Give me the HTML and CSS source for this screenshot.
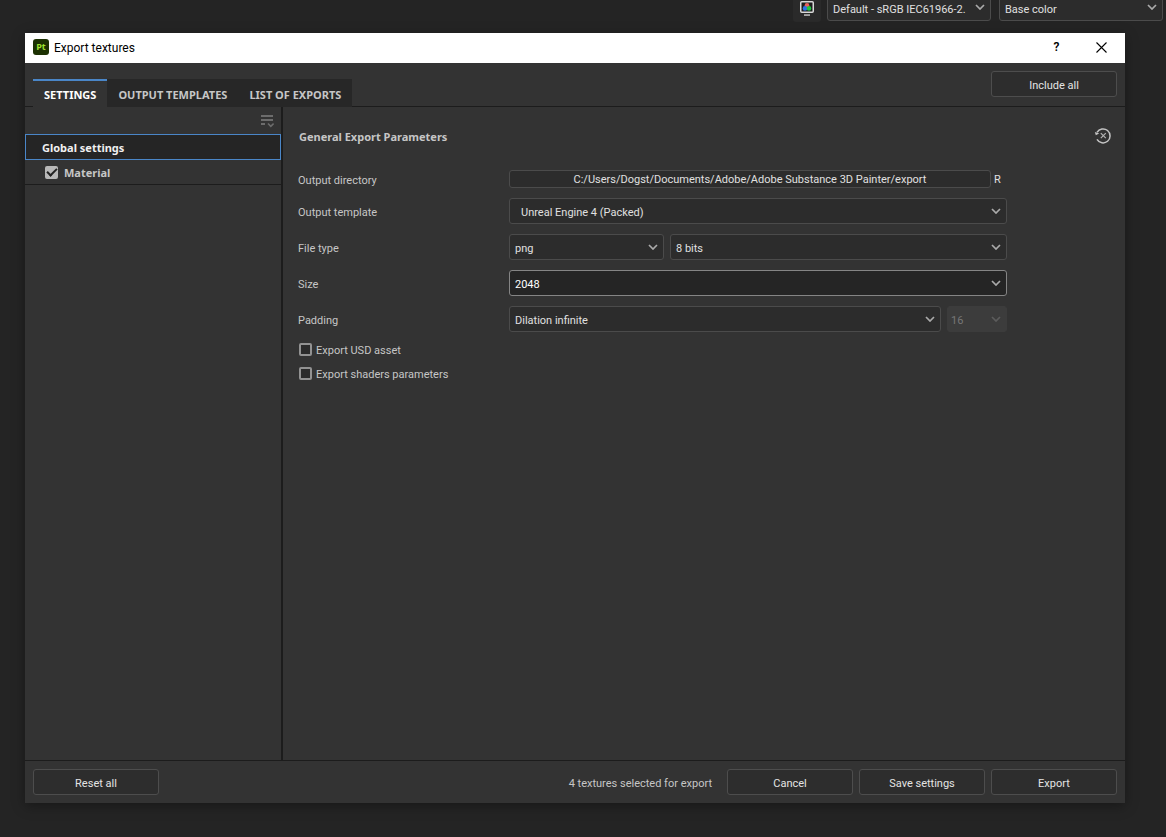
FILE: index.html
```html
<!DOCTYPE html>
<html lang="en">
<head>
<meta charset="utf-8">
<title>Export textures</title>
<link rel="stylesheet" href="styles.css">
</head>
<body>
<svg class="sprite" aria-hidden="true">
  <symbol id="chevron" viewBox="0 0 10 6"><path d="M1 1l4 4 4-4" fill="none" stroke="currentColor" stroke-width="1.7"/></symbol>
</svg>

<div class="toolbar">
  <button class="display-button" aria-label="Color management">
    <svg width="16" height="16" viewBox="0 0 16 16">
      <rect x="1.75" y="1.75" width="12.5" height="10.5" rx="1" fill="#1d1d1d" stroke="#d8d8d8" stroke-width="1.5"/>
      <circle cx="8" cy="5.2" r="2.3" fill="#e9605c"/>
      <circle cx="6" cy="8.4" r="2.3" fill="#2d73e6"/>
      <circle cx="10" cy="8.4" r="2.3" fill="#20c540"/>
      <rect x="5" y="14.4" width="6" height="1.3" fill="#d8d8d8"/>
    </svg>
  </button>
  <div class="select profile"><select aria-label="Color profile"><option>Default - sRGB IEC61966-2.</option></select><svg class="chevron"><use href="#chevron"/></svg></div>
  <div class="select channel"><select aria-label="Channel"><option>Base color</option></select><svg class="chevron"><use href="#chevron"/></svg></div>
</div>

<div class="stage">
<section class="dialog" role="dialog" aria-labelledby="dialog-title">
  <header class="titlebar">
    <svg class="logo" width="16" height="16" viewBox="0 0 16 16" aria-hidden="true">
      <rect width="16" height="16" rx="3" fill="#1c3102"/>
      <text class="logo-text" x="8" y="11" text-anchor="middle">Pt</text>
    </svg>
    <h1 class="title" id="dialog-title">Export textures</h1>
    <button class="window-button help" aria-label="Help">?</button>
    <button class="window-button" aria-label="Close">
      <svg width="11" height="11" viewBox="0 0 11 11"><path d="M.5.5l10 10M10.5.5l-10 10" stroke="#000" stroke-width="1.1"/></svg>
    </button>
  </header>

  <div class="tabbar">
    <nav class="tabs" role="tablist">
      <button class="tab active" role="tab" aria-selected="true">SETTINGS</button>
      <button class="tab" role="tab" aria-selected="false">OUTPUT TEMPLATES</button>
      <button class="tab" role="tab" aria-selected="false">LIST OF EXPORTS</button>
    </nav>
    <button class="button">Include all</button>
  </div>

  <div class="body">
    <aside class="sidebar">
      <div class="sidebar-tools">
        <button class="icon-button" aria-label="List options">
          <svg width="14" height="14" viewBox="0 0 14 14"><path d="M1 2h12M1 6h12M1 10h4" stroke="#6c6c6c" stroke-width="1.8"/><path d="M8 9.5l2.8 2.8 2.8-2.8" fill="none" stroke="#6c6c6c" stroke-width="1.6"/></svg>
        </button>
      </div>
      <button class="global-row">Global settings</button>
      <label class="material-row"><input class="check" type="checkbox" checked><span class="material-name">Material</span></label>
    </aside>

    <main class="content">
      <div class="content-head">
        <h2 class="heading">General Export Parameters</h2>
        <button class="icon-button" aria-label="Reset parameters">
          <svg width="18" height="16" viewBox="0 0 18 16"><path d="M3 4.4A7 7 0 1 1 3 11.4" fill="none" stroke="#c4c4c4" stroke-width="1.5"/><path d="M.8 4l1 3.2 3.4-1.6z" fill="#c4c4c4"/><path d="M6.8 5.2l5 5M11.8 5.2l-5 5" stroke="#b4b4b4" stroke-width="1.2"/></svg>
        </button>
      </div>

      <form class="form">
        <label class="caption" for="directory">Output directory</label>
        <div class="field path">
          <button class="directory grow" id="directory" type="button">C:/Users/Dogst/Documents/Adobe/Adobe Substance 3D Painter/export</button>
          <button class="reset-path" type="button" aria-label="Reset directory">R</button>
        </div>

        <label class="caption" for="template">Output template</label>
        <div class="field">
          <div class="select wide grow"><select id="template"><option>Unreal Engine 4 (Packed)</option></select><svg class="chevron"><use href="#chevron"/></svg></div>
        </div>

        <label class="caption" for="filetype">File type</label>
        <div class="field">
          <div class="select type"><select id="filetype"><option>png</option></select><svg class="chevron"><use href="#chevron"/></svg></div>
          <div class="select grow"><select aria-label="Bit depth"><option>8 bits</option></select><svg class="chevron"><use href="#chevron"/></svg></div>
        </div>

        <label class="caption" for="size">Size</label>
        <div class="field">
          <div class="select current grow"><select id="size"><option>2048</option></select><svg class="chevron"><use href="#chevron"/></svg></div>
        </div>

        <label class="caption" for="padding">Padding</label>
        <div class="field">
          <div class="select grow"><select id="padding"><option>Dilation infinite</option></select><svg class="chevron"><use href="#chevron"/></svg></div>
          <div class="select amount"><select aria-label="Padding size" disabled><option>16</option></select><svg class="chevron"><use href="#chevron"/></svg></div>
        </div>
      </form>

      <div class="options">
        <label class="option"><input class="check" type="checkbox"><span class="caption">Export USD asset</span></label>
        <label class="option"><input class="check" type="checkbox"><span class="caption">Export shaders parameters</span></label>
      </div>
    </main>
  </div>

  <footer class="footer">
    <button class="button">Reset all</button>
    <span class="status">4 textures selected for export</span>
    <div class="actions">
      <button class="button">Cancel</button>
      <button class="button">Save settings</button>
      <button class="button">Export</button>
    </div>
  </footer>
</section>
</div>
</body>
</html>
```

FILE: styles.css
```css
* {
  box-sizing: border-box;
}

body {
  margin: 0;
  min-height: 100vh;
  display: flex;
  flex-direction: column;
  overflow: hidden;
  background: #242424;
  color: #c6c6c6;
  font: 11px/16px Roboto, "Open Sans", sans-serif;
}

button,
select {
  font: inherit;
  color: inherit;
  margin: 0;
}

button {
  padding: 0;
  border: 0;
  background: none;
  white-space: nowrap;
}

h1,
h2 {
  margin: 0;
  font-size: inherit;
}

.sprite {
  position: absolute;
  width: 0;
  height: 0;
}

.toolbar {
  display: flex;
  justify-content: flex-end;
  gap: 8px;
  margin-top: -6px;
  padding-right: 3px;
}

.display-button {
  display: grid;
  place-items: center;
  width: 28px;
  height: 28px;
  margin-right: -2px;
  border-radius: 3px;
  background: #2a2a2a;
}

.profile,
.channel {
  width: 164px;
}

/* Drop-downs */
.select {
  position: relative;
  height: 27px;
  color: #e0e0e0;
}

.select select {
  display: block;
  width: 100%;
  height: 100%;
  padding: 4px 20px 0 5px;
  border: 1px solid #4b4b4b;
  border-radius: 3px;
  background: #2c2c2c;
  appearance: none;
}

.select .chevron {
  position: absolute;
  top: 10px;
  right: 6px;
  width: 10px;
  height: 6px;
  color: #aaaaaa;
  pointer-events: none;
}

.select.wide select {
  padding-left: 11px;
}

.select.current select {
  border-color: #858585;
  background: #252525;
  color: #ffffff;
}

.select.type {
  width: 155px;
}

.select.amount {
  width: 60px;
}

.select.amount select {
  padding-left: 3px;
  border-color: #3c3c3c;
  background: #3c3c3c;
  color: #777777;
  opacity: 1;
}

.select.amount .chevron {
  color: #5c5c5c;
}

/* Dialog window */
.stage {
  flex: 1;
  display: flex;
  padding: 11px 41px 34px 25px;
}

.dialog {
  flex: 1;
  display: flex;
  flex-direction: column;
  background: #333333;
  box-shadow: 0 3px 12px rgba(0, 0, 0, 0.35);
}

.titlebar {
  display: flex;
  align-items: center;
  height: 30px;
  padding: 0 1px 2px 8px;
  background: #ffffff;
  color: #000000;
  font-size: 12px;
}

.logo-text {
  fill: #9fe32f;
  font: bold 9px "Open Sans", sans-serif;
}

.title {
  flex: 1;
  margin-left: 5px;
  padding-top: 2px;
  font-weight: 400;
}

.window-button {
  display: grid;
  place-items: center;
  width: 45px;
  height: 28px;
}

.window-button.help {
  font-weight: 600;
}

.tabbar {
  display: flex;
  justify-content: space-between;
  align-items: flex-start;
  padding: 8px 8px 0;
  height: 44px;
  border-bottom: 1px solid #1c1c1c;
}

.tabs {
  display: flex;
  margin-top: 8px;
}

.tab,
.heading,
.global-row,
.material-row {
  font-family: "Noto Sans", "Open Sans", sans-serif;
  font-weight: 700;
}

.tab {
  height: 28px;
  padding: 2px 11px 0;
  border-top: 2px solid #272727;
  background: #272727;
}

.tab.active {
  border-color: #4a86c8;
  background: #333333;
  color: #ffffff;
}

.button {
  width: 126px;
  height: 26px;
  padding-top: 4px;
  border: 1px solid #4d4d4d;
  border-radius: 3px;
  background: #2d2d2d;
  color: #e4e4e4;
}

.body {
  flex: 1;
  display: flex;
}

/* Texture set list */
.sidebar {
  width: 258px;
  display: flex;
  flex-direction: column;
  border-right: 2px solid #1c1c1c;
}

.sidebar-tools {
  display: flex;
  justify-content: flex-end;
  align-items: center;
  height: 27px;
  padding-right: 7px;
}

.icon-button {
  display: flex;
}

.global-row {
  height: 26px;
  padding: 2px 16px 0;
  border: 1px solid #4a86c8;
  background: #252525;
  color: #f0f0f0;
  text-align: left;
}

.material-row {
  display: flex;
  align-items: center;
  gap: 6px;
  height: 25px;
  padding-left: 20px;
  border-bottom: 1px solid #1c1c1c;
}

.material-name {
  padding-top: 2px;
}

.caption {
  padding-top: 4px;
}

.check {
  appearance: none;
  flex: none;
  width: 13px;
  height: 13px;
  margin: 0;
  border: 2px solid #929292;
  border-radius: 2px;
  background: #2b2b2b;
}

.check:checked {
  display: grid;
  place-items: center;
  border-color: #b8b8b8;
  background: #b8b8b8;
}

.check:checked::before {
  content: "";
  width: 8px;
  height: 4px;
  margin-bottom: 2px;
  border: solid #222222;
  border-width: 0 0 2px 2px;
  transform: rotate(-45deg);
}

/* Export parameters */
.content {
  flex: 1;
  padding: 19px 118px 0 15px;
}

.content-head {
  display: flex;
  justify-content: space-between;
  align-items: center;
  height: 20px;
  margin: 0 -105px 24px 1px;
}

.heading {
  padding-top: 2px;
}

.form {
  display: grid;
  grid-template-columns: 211px 1fr;
  grid-template-rows: 18px repeat(4, 26px);
  row-gap: 10px;
  align-items: center;
}

.field {
  display: flex;
  gap: 6px;
}

.field.path {
  gap: 3px;
}

.field .select {
  height: 26px;
}

.grow {
  flex: 1;
}

.directory {
  height: 18px;
  padding-top: 2px;
  border: 1px solid #4b4b4b;
  border-radius: 3px;
  background: #2c2c2c;
  color: #e0e0e0;
  line-height: 14px;
}

.reset-path {
  width: 13px;
  padding-top: 2px;
  color: #e0e0e0;
  text-align: left;
}

.options {
  padding: 5px 0 0 1px;
}

.option {
  display: flex;
  align-items: center;
  gap: 4px;
  height: 24px;
}

.footer {
  display: flex;
  align-items: center;
  padding: 8px;
  border-top: 1px solid #1c1c1c;
}

.status {
  margin-left: auto;
  padding-top: 4px;
}

.actions {
  display: flex;
  gap: 6px;
  margin-left: 15px;
}
```
